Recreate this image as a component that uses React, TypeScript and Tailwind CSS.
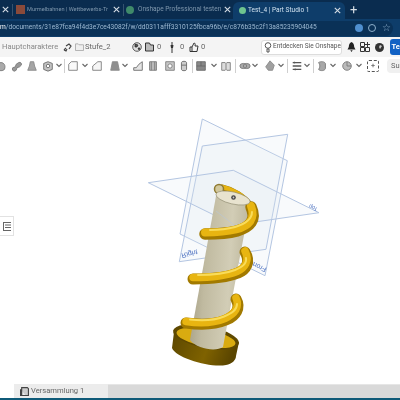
import React from 'react';

const font = "font-['Roboto',sans-serif]";

function Close({ className }: { className: string }) {
    return (
        <svg className={className} height="7" viewBox="0 0 9 9" stroke="currentColor" strokeWidth="1.4">
            <path d="M1 1l7 7M8 1l-7 7" />
        </svg>
    );
}

function Chevron({ className = '' }: { className?: string }) {
    return (
        <svg className={`w-[8px] shrink-0 ${className}`} height="5" viewBox="0 0 8 5" fill="none" stroke="#666" strokeWidth="1.1">
            <path d="M1.500 1l2.500 2.500L6.500 1" />
        </svg>
    );
}

function Divider({ className = '' }: { className?: string }) {
    return <div className={`w-px h-[14px] bg-[#cfcfcf] shrink-0 ${className}`} />;
}

// feature tool icons, a rough grey shape for each button
const shapes = [
    <path key="0" d="M3 11c-2-4 1-8 4-8s6 3 4 8c-2 2-6 2-8 0z" fill="#aaa" stroke="#777" />,
    <path key="1" d="M2 9l3-1 1-3 3-2c2-1 4 1 3 3l-2 2-3 1-1 3-2 1c-2 0-3-2-2-4z" fill="#999" stroke="#777" />,
    <path key="2" d="M5 2h4l1 5 2 5H2l2-5z" fill="#a5a5a5" stroke="#888" />,
    <path key="3" d="M2 4l5-2 5 2v7l-5 2-5-2zM5 7a2 2 0 1 0 4 0a2 2 0 1 0-4 0" fill="#c4c4c4" stroke="#666" />,
    <path key="4" d="M2 5l3-3h7v10H2z" fill="#fafafa" stroke="#777" />,
    <path key="5" d="M2 12V7l6-5h4v10z" fill="#f6f6f6" stroke="#777" />,
    <path key="6" d="M2 12l2-10h6l2 10z" fill="#8f8f8f" stroke="#888" />,
    <path key="7" d="M2 12h10V2L8 5 5 9H2z" fill="#e4e4e4" stroke="#666" />,
    <path key="8" d="M3 2h8v10H3zM5 2v10M9 2v10" fill="#bbb" stroke="#777" />,
    <path key="9" d="M2 2h10v10H2zM4.500 7a2.500 2.500 0 1 0 5 0a2.500 2.500 0 1 0-5 0" fill="#c8c8c8" stroke="#777" />,
    <path key="10" d="M4 3c0-2 6-2 6 0v8c0 2-6 2-6 0zM4 6h6" fill="#ccc" stroke="#666" />,
    <path key="11" d="M2 2h10v10H2zM2 7h10M7 2v5" fill="#888" stroke="#666" />,
    <path key="12" d="M2 3h4l1 1 1-1h4v9H8l-1-1-1 1H2zM7 4v7" fill="#ddd" stroke="#777" />,
    <path key="13" d="M1 7a4 3 0 1 0 8 0a4 3 0 1 0-8 0M5 7a4 3 0 1 0 8 0a4 3 0 1 0-8 0" fill="#aaa" stroke="#777" />,
    <path key="14" d="M7 1l5 5-2 6H5L2 8z" fill="#a0a0a0" stroke="#888" />,
    <path key="15" d="M2 3h10M2 7h10M2 11h10M4 2v2M9 6v2M5 10v2" fill="none" stroke="#555" strokeWidth="1.500" />,
    <path key="16" d="M3 3c3-2 7-1 8 1v6c-1 3-6 3-8 1 2-2 2-6 0-8z" fill="#a8a8a8" stroke="#777" />,
    <path key="17" d="M2 7a5 5 0 1 0 10 0a5 5 0 1 0-10 0M7 2v5h5" fill="#bbb" stroke="#777" />,
];

function Tool({ kind, className = '' }: { kind: number; className?: string }) {
    return (
        <svg className={`w-[12px] shrink-0 ${className}`} height="12" viewBox="0 0 14 14" strokeWidth="1">
            {shapes[kind]}
        </svg>
    );
}

function Model() {
    const labelFont = 'Liberation Sans, sans-serif';
    return (
        <svg className="absolute inset-0" width="400" height="310" viewBox="0 74 400 310">
            <defs>
                <linearGradient id="post" x1="0" y1="0.100" x2="1" y2="0.250">
                    <stop offset="0" stopColor="#9f997f" />
                    <stop offset="0.300" stopColor="#c0baa0" />
                    <stop offset="0.700" stopColor="#d2cdb6" />
                    <stop offset="1" stopColor="#bcb69c" />
                </linearGradient>
                <linearGradient id="rim" x1="0" y1="0" x2="1" y2="0.200">
                    <stop offset="0" stopColor="#5c4700" />
                    <stop offset="0.600" stopColor="#7f6200" />
                    <stop offset="1" stopColor="#5a4500" />
                </linearGradient>
            </defs>

            <g stroke="#b4c6e2" strokeWidth="1" fill="#dfe8f3" fillOpacity="0.220" strokeLinejoin="round">
                <path d="M202.300 119L287.300 160.700L265 275.700L180 234Z" />
                <path d="M202.300 146L287.700 134.300L266 249.300L179.300 261.700Z" />
                <path d="M148.300 182.700L233.300 170.300L319 212.700L234.300 225Z" />
            </g>
            <text transform="translate(181 253.500) rotate(-14) scale(1 -1)" fontSize="7" fill="#4a6fc0" fontFamily={labelFont}>Right</text>
            <text transform="translate(267 268) rotate(205)" fontSize="7" fill="#4a6fc0" fontFamily={labelFont}>Front</text>
            <text transform="translate(318 208) rotate(205)" fontSize="5.500" fill="#4a6fc0" fontFamily={labelFont}>Top</text>

            {/* base ring */}
            <path d="M174 332L172 348C176 358 210 368 226 365C232 364 236 360 236 356L239 342Z" fill="url(#rim)" />
            <ellipse cx="206" cy="337" rx="33.500" ry="11" transform="rotate(11 206 337)" fill="#5f4900" />
            <ellipse cx="206" cy="338" rx="30" ry="8.500" transform="rotate(11 206 338)" fill="#d9ab10" />

            {/* coil behind the post */}
            <g fill="none" strokeLinecap="round">
                <path d="M222 188C232 190 244 197 251 207" stroke="#a27a00" strokeWidth="7" />
                <path d="M222 187C232 189 245 196 251 206" stroke="#e6b412" strokeWidth="4.500" />
            </g>
            <circle cx="219" cy="189" r="4.500" fill="#d2c89c" stroke="#8f7a30" strokeWidth="1.500" />

            {/* post */}
            <path d="M216 196L190 340C197 349 216 352 223 347L250 203Z" fill="url(#post)" />
            <path d="M216 211L234 225L249 223" fill="none" stroke="#b4c6e2" strokeOpacity="0.500" />

            {/* coil in front */}
            <g fill="none" strokeLinecap="round">
                <path d="M251 207C257 220 250 227 237 231C226 234 215 234 205 234" stroke="#a27a00" strokeWidth="11.500" />
                <path d="M251 206C256 219 249 226 236 229.500C226 232 215 232.500 205 232.500" stroke="#e8b511" strokeWidth="8" />
                <path d="M252 212C252 220 245 224 235 227C226 229.500 218 230 210 230" stroke="#f9dc5a" strokeWidth="2" />

                <path d="M245 252C251 262 246 270 238 273C226 278 210 279 193 279" stroke="#a27a00" strokeWidth="11" />
                <path d="M245 251C250 261 245 268 237 271.500C226 276 210 277.500 193 277.500" stroke="#e8b511" strokeWidth="7.500" />
                <path d="M246 258C247 264 242 267 235 270C225 274 212 275 198 275" stroke="#f9dc5a" strokeWidth="2" />

                <path d="M236 299C241 308 236 316 226 320C214 325 200 325 186 323" stroke="#a27a00" strokeWidth="11" />
                <path d="M236 298C240 307 235 314 225 318.500C214 323 200 323.500 186 321.500" stroke="#e8b511" strokeWidth="7.500" />
                <path d="M237 304C237 310 232 313 224 316.500C214 320.500 202 321 190 319.500" stroke="#f9dc5a" strokeWidth="2" />
            </g>

            {/* top of the post */}
            <ellipse cx="233" cy="198" rx="17.500" ry="6" transform="rotate(13 233 198)" fill="#e8e3cf" stroke="#8e8a70" strokeWidth="0.600" />
            <circle cx="233.500" cy="197.500" r="2.300" fill="#444" />
            <circle cx="233.500" cy="197.500" r="0.900" fill="#ccc" />
        </svg>
    );
}

export default function App() {
    return (
        <div className={`w-[400px] h-[400px] overflow-hidden flex flex-col bg-white blur-[0.3px] ${font}`}>
            {/* tabs */}
            <div className="h-[19px] bg-[#0a2c4f] flex items-center text-[6.5px] text-[#7f97ad] shrink-0 whitespace-nowrap">
                <Close className="w-[7px] ml-[1.5px] mr-[3.5px] shrink-0 text-[#d5dde5]" />
                <div className="w-px h-[12px] bg-[#35526e] shrink-0" />
                <div className="w-[9px] h-[9px] bg-[#8a4a3a] ml-[3px] mr-[2px] shrink-0" />
                <span className="w-[85px] text-[5.6px]">Murmelbahnen | Wettbewerbs-Tr</span>
                <Close className="w-[7px] ml-[0.5px] mr-[3.5px] shrink-0 text-[#d5dde5]" />
                <div className="w-px h-[12px] bg-[#35526e] shrink-0" />
                <div className="w-[8px] h-[8px] rounded-full bg-[#3f8a6a] ml-[2px] mr-[4px] shrink-0" />
                <span className="w-[85px]">Onshape Professional testen</span>
                <Close className="w-[7px] ml-[0.5px] mr-[2.5px] shrink-0 text-[#d5dde5]" />
                <div className="h-[17px] w-[112px] mt-[2px] bg-[#0e3d6a] rounded-t-md flex items-center pl-[6px] pr-[4.5px] shrink-0 text-[#cfe0ee]">
                    <div className="w-[7px] h-[7px] rounded-full bg-[#6fc48f] mr-[2px] shrink-0" />
                    <span className="flex-1">Test_4 | Part Studio 1</span>
                    <Close className="w-[7px] shrink-0 text-[#d5dde5]" />
                </div>
                <span className="ml-[5px] text-[13px] leading-none text-[#d5dde5]">+</span>
            </div>

            {/* address bar */}
            <div className="h-[18px] bg-[#0e3d6a] flex items-center shrink-0">
                <div className="w-[393px] h-[15px] bg-[#0a3157] rounded-r-full flex items-center text-[6.6px] text-[#9db9d2] whitespace-nowrap overflow-hidden">
                    <span className="w-[354px]">
                        <span className="text-white">m</span>/documents/31e87fca94f4d3e7ce43082f/w/dd0311afff3310125fbca96b/e/c876b35c2f13a85235904045
                    </span>
                    <div className="w-[8px] h-[8px] bg-[#4f8fd0] rounded-sm ml-[1px] mr-[5px] shrink-0" />
                    <div className="w-[8px] h-[8px] border border-[#8fb0cc] rounded-full mr-[6px] shrink-0" />
                    <span className="text-[10px] leading-none text-[#8fb0cc]">☆</span>
                </div>
            </div>

            {/* document header */}
            <div className="h-[20px] bg-[#f4f4f4] flex items-center text-[7.6px] text-[#666] shrink-0 whitespace-nowrap">
                <span className="ml-[2px] w-[60.5px] text-[#888]">Hauptcharaktere</span>
                <svg className="w-[9px] mr-[3.5px]" height="9" viewBox="0 0 9 9" fill="none" stroke="#444" strokeWidth="1.200"><path d="M1 7l2-2M4 6L3 8 1 7M3 3l3-2 2 2-2 3" /></svg>
                <svg className="w-[9px] mr-px" height="8" viewBox="0 0 10 9" fill="#eee" stroke="#aaa"><path d="M.5 1h3l1 1h5v6.500H.500z" /></svg>
                <span className="w-[47px]">Stufe_2</span>
                <svg className="w-[10px] mr-[3px]" height="10" viewBox="0 0 10 10" fill="#555" stroke="#222" strokeWidth=".7"><circle cx="5" cy="5" r="4.300" fill="#ddd" /><path d="M3 2l3 1-1 2-2 0zM6 6l2 0-1 2z" /></svg>
                <svg className="w-[9px] mr-[3px]" height="10" viewBox="0 0 9 10" fill="#bbb" stroke="#333"><path d="M.5 1h4l1 2h3v6h-8z" /></svg>
                <span className="w-[12px]">0</span>
                <svg className="w-[6px] mr-[5px]" height="11" viewBox="0 0 6 11" fill="#333"><path d="M2.500 0h1v3h1l-.5 3h-.5v5h-1V6H2l-.5-3h1z" /></svg>
                <span className="w-[9px]">0</span>
                <svg className="w-[10px] mr-[2px]" height="10" viewBox="0 0 10 10" fill="none" stroke="#333"><path d="M1 5h2v4.500H1zM3 5l2-4c1 0 1.500 1 1 3h3l-1 5.500H3" /></svg>
                <span className="w-[60px]">0</span>
                <div className="w-[81px] h-[15px] bg-white border border-[#ddd] rounded-[3px] flex items-center text-[6.5px] text-[#555] shrink-0">
                    <svg className="w-[8px] ml-[2px] mr-[1px] shrink-0" height="11" viewBox="0 0 8 11" fill="none" stroke="#555"><circle cx="4" cy="3.500" r="2.800" /><path d="M3 7h2v3H3z" /></svg>
                    Entdecken Sie Onshape
                </div>
                <svg className="w-[9px] ml-[5px] mr-[4px]" height="10" viewBox="0 0 9 10" fill="#222"><path d="M4.500 0C2 1 2 3 1.800 5L.5 7.500h8L7.200 5C7 3 7 1 4.500 0zM3.300 8.300h2.400L4.500 10z" /></svg>
                <svg className="w-[10px] mr-[5px]" height="10" viewBox="0 0 10 10" fill="none" stroke="#333"><path d="M.5.500h4v4h-4zM5.500 5.500h4v4h-4zM.5 5.500h4v4h-4z" /><path d="M7.500 0v5M5 2.500h5" /></svg>
                <svg className="w-[9px] mr-[6px]" height="9" viewBox="0 0 9 9" fill="#333"><circle cx="4.500" cy="4.500" r="4.500" /><path d="M5 2l2 1-2 3-1-2z" fill="#ccc" /></svg>
                <div className="w-[10px] h-[16px] bg-[#1262c4] rounded-l-[3px] text-white text-[7.5px] font-bold leading-[16px] pl-[1.500px] shrink-0">Te</div>
            </div>

            {/* feature toolbar */}
            <div className="h-[17px] bg-white flex items-center shrink-0 overflow-hidden">
                <Tool kind={0} className="ml-[-5px]" />
                <Tool kind={1} className="ml-[4px]" />
                <Tool kind={2} className="ml-[3px]" />
                <Tool kind={3} className="ml-[4px]" />
                <Chevron className="ml-[1px]" />
                <Divider className="ml-[1px]" />
                <Tool kind={4} className="ml-[2px]" />
                <Chevron className="ml-[2px]" />
                <Tool kind={5} className="ml-[2px]" />
                <Tool kind={6} className="ml-[6px]" />
                <Chevron />
                <Tool kind={7} className="ml-[3px]" />
                <Tool kind={8} className="ml-[3px]" />
                <Tool kind={9} className="ml-[5px]" />
                <Tool kind={10} className="ml-[2px]" />
                <Divider className="ml-[2px]" />
                <Tool kind={11} className="ml-[2px]" />
                <Chevron className="ml-[3px]" />
                <Tool kind={12} className="ml-[2px]" />
                <Divider className="ml-[3px]" />
                <Tool kind={13} className="ml-[3px]" />
                <Chevron />
                <Tool kind={14} className="ml-[5px]" />
                <Chevron className="ml-[1px]" />
                <Divider className="ml-[2px]" />
                <Tool kind={15} className="ml-[3px]" />
                <Chevron />
                <Divider className="ml-[2px]" />
                <Tool kind={16} className="ml-[2px]" />
                <Chevron className="ml-[1px]" />
                <Tool kind={17} className="ml-[4px]" />
                <Chevron className="ml-[2px]" />
                <div className="w-[12px] h-[12px] ml-[4px] border border-dashed border-[#555] rounded-[2px] flex items-center justify-center text-[8px] leading-none text-[#444] shrink-0">+</div>
                <div className="ml-[8px] h-[14px] bg-[#f0f0f0] rounded-l-sm text-[7.5px] text-[#666] leading-[14px] pl-[4px] flex-1">Su</div>
            </div>

            {/* graphics area */}
            <div className="flex-1 relative">
                <Model />
                <div className="absolute left-0 top-[142px] w-[14px] h-[20px] bg-white border border-l-0 border-[#e2e2e2] flex items-center justify-center">
                    <svg width="8" height="9" viewBox="0 0 8 9" stroke="#666" fill="none"><path d="M0 .5h8M2 3h6M2 5.500h6M0 8.500h8M.5 0v9" /></svg>
                </div>
            </div>

            {/* bottom tabs */}
            <div className="h-[14px] flex shrink-0 text-[7.6px] text-[#666] items-stretch">
                <div className="w-[14px] bg-white" />
                <div className="w-[94px] bg-[#ececec] flex items-center pl-[6px] gap-[2px]">
                    <svg width="9" height="9" viewBox="0 0 8 8" fill="#ccc" stroke="#444"><path d="M1.500.5h5l1 1v6h-6zM.5 2v6h5" /></svg>
                    Versammlung 1
                </div>
                <div className="flex-1 bg-[#d9d9d9] border-t border-[#e6e6e6]" />
            </div>
            <div className="h-[2px] bg-[#0f5a78] shrink-0" />
        </div>
    );
}
